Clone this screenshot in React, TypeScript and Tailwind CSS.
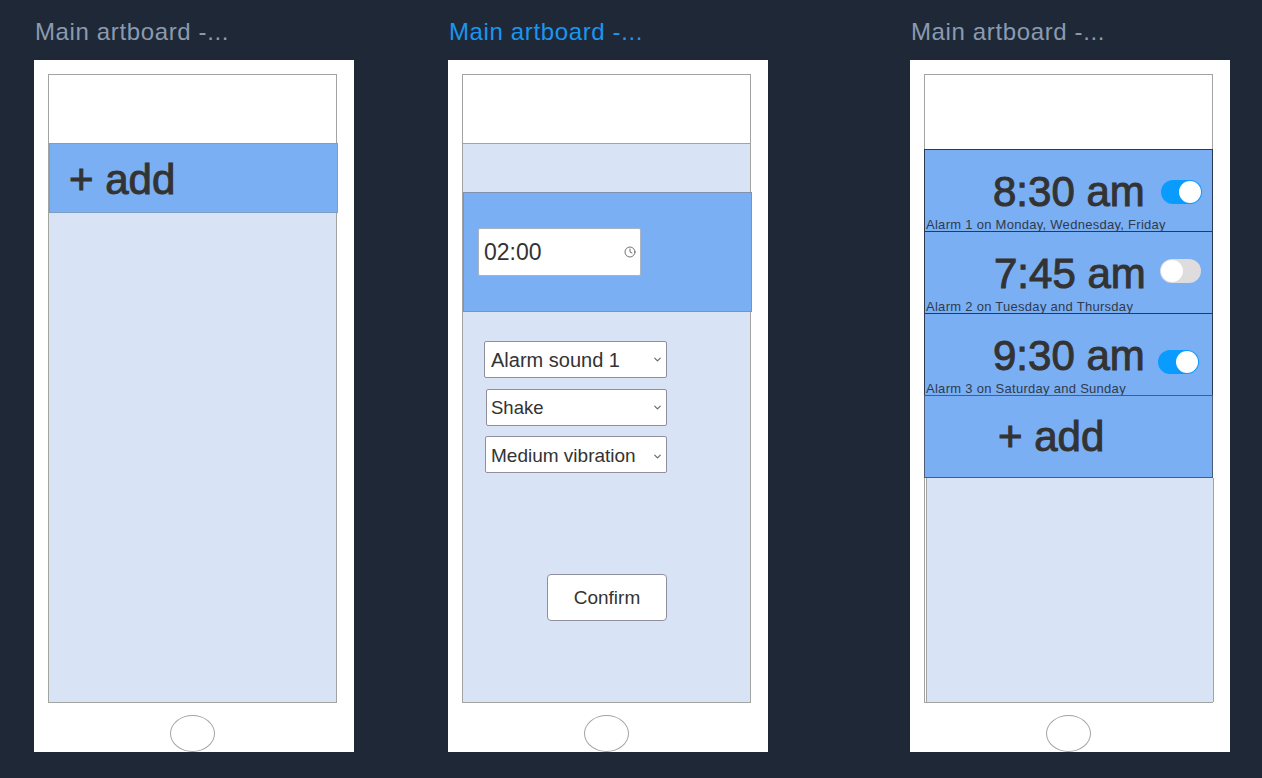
import React from 'react';
import { ChevronDown, Clock } from 'lucide-react';

const Phone: React.FC<{ title: string; active?: boolean; children: React.ReactNode }> = ({ title, active, children }) => (
  <div className="w-[320px] shrink-0">
    <p className={`h-[30px] pt-px pl-px mb-[14px] text-[24px] leading-[30px] tracking-[0.63px] ${active ? 'text-[#1a96f0]' : 'text-[#8b9ab1]'}`}>
      {title}
    </p>
    <div className="h-[692px] bg-white pt-[14px] pl-[14px]">
      <div className="w-[289px] h-[629px] border border-[#a3a3a3] flex flex-col">{children}</div>
      <div className="w-[45px] h-[37px] mt-[12px] mx-[122px] rounded-[50%] border border-[#a3a3a3]" />
    </div>
  </div>
);

const AddLabel = () => <span className="text-[42px] text-[#333] [-webkit-text-stroke:1px_#333]">+ add</span>;

const Select: React.FC<{ label: string; className: string }> = ({ label, className }) => (
  <div className={`h-[37px] bg-white border border-[#8f8f9d] rounded-[2px] flex items-center pr-[3px] text-[#333] ${className}`}>
    <span className="flex-1">{label}</span>
    <ChevronDown size={11} strokeWidth={2.5} className="text-[#666]" />
  </div>
);

const alarms = [
  { time: '8:30 am', note: 'Alarm 1 on Monday, Wednesday, Friday', on: true, toggle: 'ml-[16px] mt-[13px]', pad: 'pl-[68px]' },
  { time: '7:45 am', note: 'Alarm 2 on Tuesday and Thursday', on: false, toggle: 'ml-[14px] mt-[10px]', pad: 'pl-[69px]' },
  { time: '9:30 am', note: 'Alarm 3 on Saturday and Sunday', on: true, toggle: 'ml-[13px] mt-[19px]', pad: 'pl-[68px]' },
];

const Toggle: React.FC<{ on: boolean; className: string }> = ({ on, className }) => (
  <div className={`w-[41px] h-[24px] rounded-full p-px flex shrink-0 ${on ? 'bg-[#0a9bff] justify-end' : 'bg-[#dedcdc] justify-start'} ${className}`}>
    <div className="w-[22px] h-[22px] rounded-full bg-white" />
  </div>
);

export default function App() {
  return (
    <div className="h-screen bg-[#1e2836] overflow-hidden flex pt-[16px] pl-[34px] gap-[94px] font-['Liberation_Sans',Arial,sans-serif]">
      <Phone title="Main artboard -...">
        <div className="h-[68px]" />
        <div className="w-[289px] h-[70px] bg-[#7bafF3] border border-[#7f9cc4] flex items-center pl-[19px] pt-[3px] shrink-0">
          <AddLabel />
        </div>
        <div className="flex-1 bg-[#d8e4f6]" />
      </Phone>

      <Phone title="Main artboard -..." active>
        <div className="h-[69px] border-b border-[#a3a3a3] shrink-0" />
        <div className="flex-1 bg-[#d8e4f6] pt-[48px]">
          <div className="w-[289px] h-[120px] bg-[#7bafF3] border border-[#7f93b0] flex items-center pl-[14px]">
            <div className="w-[163px] h-[48px] bg-white border border-[#a9b4c4] rounded-[2px] flex items-center pl-[5px] pr-[4px] text-[23px] text-[#333]">
              <span className="flex-1">02:00</span>
              <Clock size={12} strokeWidth={1.5} className="text-[#444]" />
            </div>
          </div>
          <div className="mt-[29px] flex flex-col items-end w-[204px] gap-[10px]">
            <Select label="Alarm sound 1" className="w-[183px] pl-[6px] text-[20px]" />
            <Select label="Shake" className="w-[181px] mt-px pl-[4px] text-[18.5px]" />
            <Select label="Medium vibration" className="w-[182px] pl-[5px] pt-[3px] text-[19px]" />
          </div>
          <button className="block w-[120px] h-[47px] mt-[101px] ml-[84px] pt-px bg-white border border-[#8f8f9d] rounded-[4px] text-[19px] text-[#333]">
            Confirm
          </button>
        </div>
      </Phone>

      <div className="ml-[48px]">
        <Phone title="Main artboard -...">
          <div className="h-[75px] shrink-0" />
          {alarms.map(a => (
            <div key={a.note} className="-ml-px -mt-px first:mt-0 w-[289px] h-[83px] shrink-0 bg-[#7bafF3] border border-[#2c3a50] flex flex-col">
              <div className={`flex-1 flex items-start pt-[17px] ${a.pad}`}>
                <span className="text-[42px] leading-[50px] text-[#333] [-webkit-text-stroke:1px_#333]">{a.time}</span>
                <Toggle on={a.on} className={a.toggle} />
              </div>
              <p className="text-[13px] leading-[13px] tracking-[0.28px] text-[#2f3a4c] pl-px">{a.note}</p>
            </div>
          ))}
          <div className="-ml-px -mt-px w-[289px] h-[83px] shrink-0 bg-[#7bafF3] border border-[#4d5d75] flex items-center pl-[73px]">
            <AddLabel />
          </div>
          <div className="flex-1 bg-[#d8e4f6] border-l border-r border-[#a3a3a3] ml-px -mr-[2px]" />
        </Phone>
      </div>
    </div>
  );
}
